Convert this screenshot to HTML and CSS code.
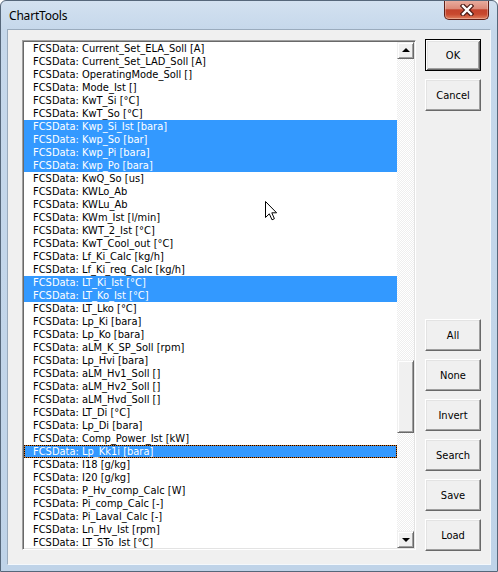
FILE: index.html
```html
<!DOCTYPE html>
<html lang="de">
<head>
<meta charset="utf-8">
<title>ChartTools</title>
<link rel="stylesheet" href="styles.css">
</head>
<body>
<div class="window">
  <div class="titlebar">
    <span class="title">ChartTools</span>
    <div class="close">
      <svg width="14" height="12" viewBox="0 0 14 12">
        <path d="M3 2 L11 10 M11 2 L3 10" stroke="#4a1a14" stroke-width="4.6" stroke-linecap="square"/>
        <path d="M3 2 L11 10 M11 2 L3 10" stroke="#ffffff" stroke-width="2.4" stroke-linecap="square"/>
      </svg>
    </div>
  </div>
  <div class="client">
    <div class="listbox">
      <div class="items">
        <div class="item">FCSData: Current_Set_ELA_Soll [A]</div>
        <div class="item">FCSData: Current_Set_LAD_Soll [A]</div>
        <div class="item">FCSData: OperatingMode_Soll []</div>
        <div class="item">FCSData: Mode_Ist []</div>
        <div class="item">FCSData: KwT_Si [°C]</div>
        <div class="item">FCSData: KwT_So [°C]</div>
        <div class="item sel">FCSData: Kwp_Si_Ist [bara]</div>
        <div class="item sel">FCSData: Kwp_So [bar]</div>
        <div class="item sel">FCSData: Kwp_Pi [bara]</div>
        <div class="item sel">FCSData: Kwp_Po [bara]</div>
        <div class="item">FCSData: KwQ_So [us]</div>
        <div class="item">FCSData: KWLo_Ab</div>
        <div class="item">FCSData: KWLu_Ab</div>
        <div class="item">FCSData: KWm_Ist [l/min]</div>
        <div class="item">FCSData: KWT_2_Ist [°C]</div>
        <div class="item">FCSData: KwT_Cool_out [°C]</div>
        <div class="item">FCSData: Lf_Ki_Calc [kg/h]</div>
        <div class="item">FCSData: Lf_Ki_req_Calc [kg/h]</div>
        <div class="item sel">FCSData: LT_Ki_Ist [°C]</div>
        <div class="item sel">FCSData: LT_Ko_Ist [°C]</div>
        <div class="item">FCSData: LT_Lko [°C]</div>
        <div class="item">FCSData: Lp_Ki [bara]</div>
        <div class="item">FCSData: Lp_Ko [bara]</div>
        <div class="item">FCSData: aLM_K_SP_Soll [rpm]</div>
        <div class="item">FCSData: Lp_Hvi [bara]</div>
        <div class="item">FCSData: aLM_Hv1_Soll []</div>
        <div class="item">FCSData: aLM_Hv2_Soll []</div>
        <div class="item">FCSData: aLM_Hvd_Soll []</div>
        <div class="item">FCSData: LT_Di [°C]</div>
        <div class="item">FCSData: Lp_Di [bara]</div>
        <div class="item">FCSData: Comp_Power_Ist [kW]</div>
        <div class="item sel focus">FCSData: Lp_Kk1i [bara]</div>
        <div class="item">FCSData: I18 [g/kg]</div>
        <div class="item">FCSData: I20 [g/kg]</div>
        <div class="item">FCSData: P_Hv_comp_Calc [W]</div>
        <div class="item">FCSData: Pi_comp_Calc [-]</div>
        <div class="item">FCSData: Pi_Laval_Calc [-]</div>
        <div class="item">FCSData: Ln_Hv_Ist [rpm]</div>
        <div class="item">FCSData: LT_STo_Ist [°C]</div>
      </div>
      <div class="vscroll">
        <div class="sbtn"><span class="arrow-up"></span></div>
        <div class="track"><div class="thumb"></div></div>
        <div class="sbtn"><span class="arrow-down"></span></div>
      </div>
    </div>
    <div class="buttons">
      <div class="group">
        <button class="btn default">OK</button>
        <button class="btn">Cancel</button>
      </div>
      <div class="group">
        <button class="btn">All</button>
        <button class="btn">None</button>
        <button class="btn">Invert</button>
        <button class="btn">Search</button>
        <button class="btn">Save</button>
        <button class="btn">Load</button>
      </div>
    </div>
  </div>
  <svg class="cursor" width="13" height="20" viewBox="0 0 13 20">
    <polygon points="0.5,0.5 0.5,16.5 4.3,12.8 7,18.8 9.4,17.7 6.8,11.8 11.6,11.8" fill="#ffffff" stroke="#000000" stroke-width="1" stroke-linejoin="miter"/>
  </svg>
</div>
</body>
</html>
```

FILE: styles.css
```css
html, body {
  margin: 0;
  padding: 0;
  background: #ffffff;
}

.window {
  position: relative;
  width: 498px;
  height: 572px;
  box-sizing: border-box;
  border: 1px solid #56677a;
  border-radius: 6px 6px 0 0;
  padding: 0 6px 6px 6px;
  display: flex;
  flex-direction: column;
  background: linear-gradient(180deg, #d3e1f0 0px, #c6d8eb 28px, #bfd3e8 100%);
  overflow: hidden;
}

.titlebar {
  height: 28px;
  display: flex;
  align-items: flex-start;
  flex: none;
}

.title {
  padding: 7px 0 0 2px;
  font: 12px/16px "Noto Sans", "Open Sans", sans-serif;
  color: #000;
  letter-spacing: -0.2px;
}

.close {
  margin-left: auto;
  margin-right: 2px;
  margin-top: -1px;
  width: 45px;
  height: 20px;
  box-sizing: border-box;
  border: 1px solid #5e1f17;
  border-top: none;
  border-radius: 0 0 5px 5px;
  background: linear-gradient(180deg, #eab0a2 0%, #dc8a79 45%, #c3432c 52%, #c8492f 75%, #e0805f 100%);
  box-shadow: inset 0 0 0 1px rgba(255, 255, 255, 0.3);
  display: flex;
  align-items: center;
  justify-content: center;
}

.close svg {
  display: block;
}

.client {
  flex: 1;
  display: flex;
  gap: 9px;
  box-sizing: border-box;
  border: 1px solid;
  border-color: #9aabbd #f4f8fc #f4f8fc #9aabbd;
  background: #f0f0f0;
  padding: 9px 9px 13px 14px;
  font: 11px "DejaVu Sans Condensed", "Liberation Sans", sans-serif;
}

.listbox {
  flex: 1;
  margin-top: 1px;
  height: 510px;
  box-sizing: border-box;
  border: 1px solid;
  border-color: #a0a0a0 #ffffff #ffffff #a0a0a0;
  box-shadow: inset 1px 1px #696969, inset -1px -1px #e3e3e3;
  padding: 1px;
  background: #ffffff;
  display: flex;
}

.items {
  flex: 1;
  overflow: hidden;
}

.item {
  height: 13px;
  line-height: 13px;
  padding-left: 9px;
  white-space: nowrap;
  color: #000;
  box-sizing: border-box;
}

.item.sel {
  background: #3399ff;
  color: #ffffff;
}

.item.focus {
  border: 1px dotted #000;
  background: linear-gradient(#3399ff, #3399ff) padding-box, #d27020;
  padding-left: 8px;
  line-height: 11px;
}

.vscroll {
  width: 17px;
  display: flex;
  flex-direction: column;
}

.sbtn,
.thumb {
  box-sizing: border-box;
  background: #f0f0f0;
  border: 1px solid;
  border-color: #f0f0f0 #696969 #696969 #f0f0f0;
  box-shadow: inset 1px 1px #ffffff, inset -1px -1px #a0a0a0;
}

.sbtn {
  height: 17px;
  display: flex;
  align-items: center;
  justify-content: center;
  flex: none;
}

.arrow-up {
  width: 0;
  height: 0;
  border-left: 4px solid transparent;
  border-right: 4px solid transparent;
  border-bottom: 4px solid #000;
  margin-top: -1px;
}

.arrow-down {
  width: 0;
  height: 0;
  border-left: 4px solid transparent;
  border-right: 4px solid transparent;
  border-top: 4px solid #000;
  margin-top: 1px;
}

.track {
  flex: 1;
  background: repeating-conic-gradient(#eeeeee 0 25%, #ffffff 0 50%) 0 0 / 2px 2px;
}

.thumb {
  margin-top: 301px;
  height: 73px;
}

.buttons {
  width: 56px;
  height: 512px;
  display: flex;
  flex-direction: column;
  justify-content: space-between;
}

.group {
  display: flex;
  flex-direction: column;
  gap: 8px;
}

.btn {
  width: 56px;
  height: 32px;
  margin: 0;
  padding: 0;
  box-sizing: border-box;
  background: #f0f0f0;
  border: 1px solid;
  border-color: #ffffff #696969 #696969 #ffffff;
  box-shadow: inset -1px -1px #a0a0a0, inset 1px 1px #e3e3e3;
  font: 11px "DejaVu Sans Condensed", "Liberation Sans", sans-serif;
  color: #000;
}

.btn.default {
  border: 1px solid #000;
  box-shadow: inset 1px 1px #ffffff, inset -1px -1px #696969, inset 2px 2px #e3e3e3, inset -2px -2px #a0a0a0;
}

.cursor {
  position: absolute;
  left: 264px;
  top: 200px;
  display: block;
}
```
